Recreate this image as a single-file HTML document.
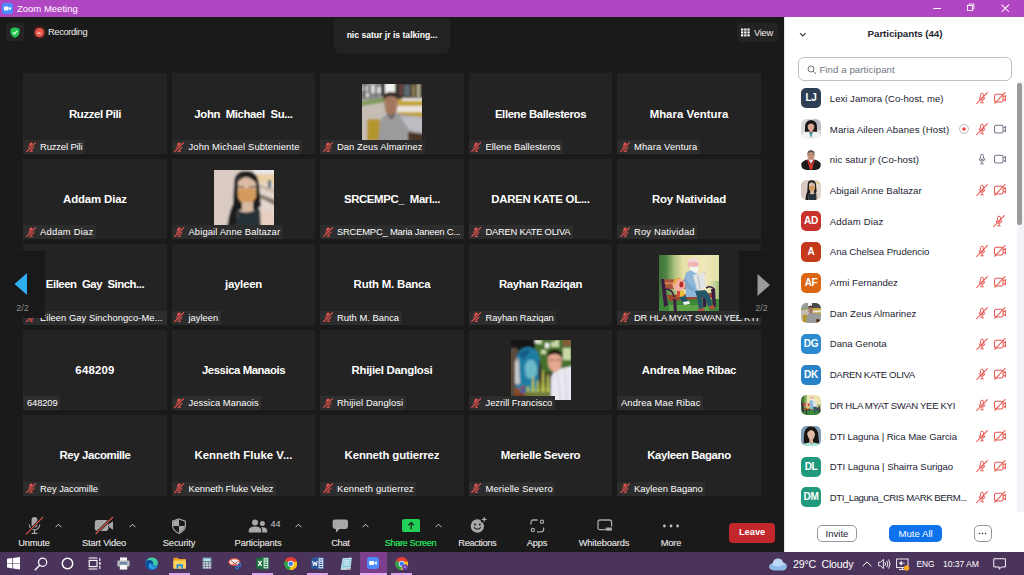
<!DOCTYPE html>
<html lang="en">
<head>
<meta charset="utf-8">
<title>Zoom Meeting</title>
<style>
*{box-sizing:border-box;margin:0;padding:0}
html,body{width:1024px;height:575px;overflow:hidden;background:#1a1a1a;font-family:"Liberation Sans",sans-serif;}
#root{position:relative;width:1024px;height:575px;overflow:hidden}
.abs{position:absolute}
/* title bar */
#titlebar{position:absolute;left:0;top:0;width:1024px;height:17px;background:#b146c2;color:#fff;font-size:9.5px;line-height:17px}
#titlebar .t{position:absolute;left:17px;top:0;white-space:nowrap}
/* video area */
#video{position:absolute;left:0;top:17px;width:784px;height:535px;background:#1a1a1a}
.tile{position:absolute;width:143.8px;height:80.7px;background:#232323;overflow:hidden}
.tile .big{position:absolute;left:0;right:0;top:32.3px;text-align:center;color:#fff;font-weight:bold;font-size:11.4px;line-height:16px;white-space:nowrap}
.tile .ph{position:absolute;left:42.1px;top:10.8px;width:60px;height:60px;overflow:hidden}
.tile .lab{position:absolute;left:0.4px;bottom:0;height:14px;background:#2d2d2d;color:#fff;font-size:9.4px;line-height:14px;padding:0 2.5px 0 16.5px;white-space:nowrap;max-width:143.4px;overflow:hidden}
.tile .lab.nm{padding-left:3.5px}
.tile .lab .mi{position:absolute;left:2.3px;top:1.6px;width:10.4px;height:10.4px}
/* panel */
#panel{position:absolute;left:784px;top:17px;width:240px;height:535px;background:#fff}
.prow{position:absolute;left:0;width:240px;height:30px}
.prow .av{position:absolute;left:17px;top:5px;width:20px;height:20px;border-radius:5px;color:#fff;font-size:10px;font-weight:bold;line-height:20px;text-align:center;overflow:hidden;letter-spacing:-0.3px}
.prow .pn{position:absolute;left:45.8px;top:7.6px;font-size:9.6px;line-height:16px;color:#232333;white-space:nowrap}
.prow .pi{position:absolute;top:8.7px}
/* taskbar */
#taskbar{position:absolute;left:0;top:552px;width:1024px;height:23px;background:#4b345c;overflow:hidden}
/* toolbar */
.tb{position:absolute;top:543px;transform:translate(-50%,-50%);color:#cacaca;font-size:9.3px;white-space:nowrap;letter-spacing:-0.15px;text-shadow:0 0 0.4px #cacaca}
</style>
</head>
<body>
<div id="root">
<svg width="0" height="0" style="position:absolute">
<defs>
<g id="mutesm">
  <rect x="3.6" y="0.6" width="3.8" height="6.6" rx="1.9" fill="#e8544e"/>
  <path d="M2.4 4.8 a3.1 3.1 0 0 0 6.2 0" fill="none" stroke="#e8544e" stroke-width="0.9"/>
  <path d="M5.5 7.8 v2 M3.6 9.9 h3.8" stroke="#e8544e" stroke-width="1" fill="none"/>
  <path d="M10.5 0.4 L0.4 10.3" stroke="#2c2c2c" stroke-width="2.4"/>
  <path d="M10.5 0.4 L0.4 10.3" stroke="#e8544e" stroke-width="1.25"/>
</g>
<g id="pmute">
  <rect x="4.6" y="1.2" width="2.8" height="5.6" rx="1.4" fill="none" stroke="#e8544e" stroke-width="1"/>
  <path d="M3.2 5.4 a2.8 2.8 0 0 0 5.6 0" fill="none" stroke="#e8544e" stroke-width="1"/>
  <path d="M6 8.3 v2.3 M4.3 10.8 h3.4" stroke="#e8544e" stroke-width="1" fill="none"/>
  <path d="M11.6 0.3 L0.4 11.8" stroke="#e8544e" stroke-width="1.05"/>
</g>
<g id="pmic">
  <rect x="4.6" y="1.2" width="2.8" height="5.6" rx="1.4" fill="none" stroke="#747487" stroke-width="1"/>
  <path d="M3.2 5.4 a2.8 2.8 0 0 0 5.6 0" fill="none" stroke="#747487" stroke-width="1"/>
  <path d="M6 8.3 v2.3 M4.3 10.8 h3.4" stroke="#747487" stroke-width="1" fill="none"/>
</g>
<g id="pvidoff">
  <rect x="0.5" y="2.3" width="8.6" height="7.6" rx="1.6" fill="none" stroke="#e8544e" stroke-width="1.05"/>
  <path d="M9.6 5 L11.7 3.6 V8.6 L9.6 7.2" fill="none" stroke="#e8544e" stroke-width="1.05"/>
  <path d="M11.4 0.2 L0.4 11.6" stroke="#e8544e" stroke-width="1.05"/>
</g>
<g id="pvid">
  <rect x="0.5" y="2.3" width="8.6" height="7.6" rx="1.6" fill="none" stroke="#747487" stroke-width="1.05"/>
  <path d="M9.6 5 L11.7 3.6 V8.6 L9.6 7.2" fill="none" stroke="#747487" stroke-width="1.05"/>
</g>
<g id="recdot">
  <circle cx="6" cy="6" r="4.4" fill="none" stroke="#9a9aa2" stroke-width="0.7"/>
  <circle cx="6" cy="6" r="1.8" fill="#e8403a"/>
</g>
<filter id="bl" x="-5%" y="-5%" width="110%" height="110%"><feGaussianBlur stdDeviation="1.1"/></filter>
<filter id="bl2" x="-5%" y="-5%" width="110%" height="110%"><feGaussianBlur stdDeviation="0.45"/></filter>
<linearGradient id="g3" x1="0" y1="0" x2="1" y2="0"><stop offset="0" stop-color="#3a6e36"/><stop offset="0.14" stop-color="#4f8344"/><stop offset="0.27" stop-color="#a9c07c"/><stop offset="0.4" stop-color="#e6e0a4"/><stop offset="0.75" stop-color="#f0e8b8"/><stop offset="1" stop-color="#dfe0a8"/></linearGradient><linearGradient id="g3b" x1="0" y1="0" x2="1" y2="0"><stop offset="0" stop-color="#e0e0a8" stop-opacity="0"/><stop offset="1" stop-color="#8db66e"/></linearGradient>
<clipPath id="c60"><rect width="60" height="60"/></clipPath>
<clipPath id="c20"><rect width="20" height="20" rx="5"/></clipPath>
<g id="p1" clip-path="url(#c60)"><g filter="url(#bl)">
  <rect x="-2" y="-2" width="64" height="64" fill="#b9b2aa"/>
  <rect x="-2" y="-2" width="24" height="18" fill="#8b8d8a"/>
  <path d="M0 2 h6 v5 h-6z M9 1 h4 v8 h-4z M15 3 h4 v6h-4z M3 9 h5 v4 h-5z" fill="#d9dad8"/>
  <path d="M1 0 h3 v14 h-3z M7 2 h2 v12 h-2z M13 1 h2 v12 h-2z" fill="#4a4c48" opacity=".6"/>
  <rect x="21" y="-2" width="13" height="11" fill="#f2f2f0"/>
  <rect x="19" y="-2" width="4" height="14" fill="#2e2c2a"/>
  <rect x="33" y="-2" width="29" height="18" fill="#3c3a36"/>
  <rect x="38" y="0" width="2" height="11" fill="#7a4a3e"/><rect x="42" y="1" width="6" height="11" fill="#5f6a70"/><rect x="50" y="1" width="3" height="12" fill="#8f7e4e"/><rect x="55" y="0" width="3" height="13" fill="#b4ad92"/>
  <path d="M-2 18 L22 14 L22 19 L-2 23 Z" fill="#7d9a52"/>
  <path d="M-2 22 L24 18 L30 62 L-2 62 Z" fill="#c5bdb4"/>
  <path d="M36 15 H62 V36 H36 Z" fill="#c4a536"/>
  <path d="M34 22 H62 V28 H34 Z" fill="#ebe4dc"/>
  <path d="M40 14 H62 V17 H40 Z" fill="#e2ddd2"/>
  <rect x="5" y="35" width="13" height="22" rx="2" fill="#b3962e"/>
  <path d="M16 62 L18 38 Q19 32 26 30 L38 30 Q50 32 62 33 V50 L50 48 L48 62 Z" fill="#9b9b9e"/>
  <path d="M38 32 Q52 32 62 34 V49 L47 46 Z" fill="#bcbcc2"/>
  <path d="M46 48 L62 50 V62 H46 Z" fill="#4a3626"/>
  <path d="M22 15 Q22 8 29 8 Q36 8 36 15 L35 26 Q33 32 29 32 Q25 32 23 26 Z" fill="#a47860"/>
  <path d="M21.5 16 Q21 8 29 8 Q37 8 36.5 16 Q34 12 29 12 Q24 12 21.5 16 Z" fill="#2a2420"/>
  <path d="M25 30 L29 36 L34 30 L32 29 L29 33 L27 29 Z" fill="#5a5a5e"/>
</g></g>
<g id="p2" clip-path="url(#c60)"><g filter="url(#bl)">
  <rect x="-2" y="-2" width="64" height="64" fill="#d9cbc4"/>
  <rect x="38" y="-2" width="24" height="64" fill="#e2d6ce"/>
  <rect x="40" y="-2" width="22" height="6" fill="#e8e8ea"/>
  <rect x="42" y="4" width="20" height="9" fill="#e8cfa4"/>
  <path d="M44 14 L62 20 V24 L44 17 Z" fill="#c8b8a4"/>
  <rect x="54" y="10" width="3" height="8" fill="#5a6a7a"/>
  <path d="M46 24 L62 30 V36 L46 28 Z" fill="#8a7c6c"/>
  <path d="M20 14 Q20 1 32 1 Q44 1 45 14 L47 36 L42 40 L24 40 L22 62 L13 62 Q14 44 19 34 Z" fill="#1b1a1d"/>
  <path d="M24 12 Q25 4 32 4 Q41 4 42 14 L42 24 Q40 34 33 34 Q26 34 24 26 Z" fill="#dcbca6"/>
  <path d="M24 12 Q26 3 33 3 Q41 3 43 14 Q38 8 32 7 Q27 8 24 12 Z" fill="#1b1a1d"/>
  <path d="M23.5 20 Q33 16 42.5 20 L42 27 Q39 34 33 34 Q26 34 24 27 Z" fill="#d39c5c"/>
  <path d="M23 17 h7 M35 17 h7" stroke="#3a2a24" stroke-width="1"/>
  <path d="M28 32 H39 V42 H28 Z" fill="#d8b8a2"/>
  <path d="M24 40 Q33 46 44 38 L48 42 V62 H22 Z" fill="#283238"/>
  <path d="M46 40 Q54 38 60 46 V62 H47 Z" fill="#e6cfc0"/>
</g></g>
<g id="p3" clip-path="url(#c60)"><g filter="url(#bl2)">
  <rect x="-2" y="-2" width="64" height="64" fill="url(#g3)"/>
  <rect x="46" y="26" width="16" height="24" fill="url(#g3b)"/>
  <rect x="-2" y="44" width="64" height="18" fill="#3d8738"/>
  <rect x="10" y="50" width="40" height="6" fill="#5da447"/>
  <path d="M3 24 L28 25 L30 34 L6 34 Z" fill="#a8553a"/>
  <path d="M5 28 L29 29" stroke="#d98a5a" stroke-width="1.6"/>
  <path d="M8 40 L54 38 L55 43 L10 46 Z" fill="#9c4a2e"/>
  <path d="M2 24 L5 24 L9 50 L5 52 Z M14 44 L17 44 L18 58 L15 58 Z M52 34 L56 34 L57 52 L54 52 Z M44 42 L47 42 L47 52 L44 52 Z" fill="#3b1c42"/>
  <path d="M47 33 Q52 30 55 34 Q56 38 53 40" fill="none" stroke="#3b1c42" stroke-width="1.6"/>
  <path d="M6 34 Q14 34 15 42" fill="none" stroke="#3b1c42" stroke-width="1.6"/>
  <circle cx="34" cy="9" r="5.6" fill="#f0b6b0"/>
  <path d="M28.6 8 Q29 2.6 35 3 Q40 3.4 39.6 8 Q34 5 28.6 8 Z" fill="#f6d9dc"/>
  <path d="M30.5 11 Q35 13 39.5 11 Q40 18 36 19.5 Q31 18 30.5 11 Z" fill="#f4f4f4"/>
  <path d="M26 20 Q28 15 33 16 L40 20 L41 30 L38 42 L27 42 Z" fill="#8eb7da"/>
  <path d="M25.5 22 Q30 30 36 33 L35 37 Q27 34 25 26 Z" fill="#7aa6cc"/>
  <path d="M34 20 L45 18 L47 33 L38 35 Z" fill="#e2e4e6"/>
  <path d="M44 18 L46 15 L47 20 Z" fill="#d2d4d6"/>
  <path d="M39 21 L41 34" stroke="#b8babc" stroke-width="1"/>
  <path d="M36 36 L46 35 Q51 38 53 50 L49 52 Q47 42 43 42 L44 54 L40 55 L38 42 Z" fill="#28566a"/>
  <path d="M39 54 L45 53 L46 57 L39 57.5 Z M50 51 L55 50 L56 54 L51 54.5 Z" fill="#a8543a"/>
  <circle cx="20" cy="30" r="6.4" fill="#f2b2a2"/>
  <path d="M14 28 Q15 22 22 23 Q17 25 16 30 Z" fill="#e8a83a"/>
  <ellipse cx="22.4" cy="29.6" rx="2" ry="3" fill="#b82c2c"/>
  <path d="M19 36 L25 36 L25 42 L19 42 Z" fill="#e7bf32"/>
  <path d="M18 36 L21 36 L21 42 L18 41 Z" fill="#d8483a"/>
  <path d="M20 42 L27 41 L29 47 L24 48 Z" fill="#28566a"/>
  <path d="M24 47 L30 46 L31 49 L25 50 Z" fill="#f2f2f2"/>
</g></g>
<g id="p4" clip-path="url(#c60)"><g filter="url(#bl)">
  <rect x="-2" y="-2" width="64" height="64" fill="#3a3a2a"/>
  <rect x="-2" y="-2" width="28" height="12" fill="#181812"/>
  <rect x="-2" y="8" width="8" height="54" fill="#5a4c3c"/>
  <rect x="24" y="-2" width="38" height="34" fill="#46702f"/>
  <path d="M26 0 h5 v4 h-5z M40 2 h8 v5 h-8z M52 8 h8 v12 h-8z M30 10 h5 v4 h-5z M44 0 h4 v3 h-4z" fill="#c9d8a6"/>
  <path d="M24 0 h4 v3 h-4z M34 3 h4 v5 h-4z" fill="#eef2e6"/>
  <path d="M52 0 h8 v6 h-8z" fill="#8a5a3a"/>
  <path d="M5 52 V24 Q5 8 17 7 Q29 8 29 24 V52 Z" fill="#1c7ea4"/>
  <path d="M14 26 Q16 18 22 20 Q27 24 26 34 Q22 40 16 38 Q13 32 14 26 Z" fill="#6bb8c8"/>
  <path d="M8 14 Q14 8 20 10 L12 20 Z" fill="#155a82"/>
  <path d="M28 20 Q32 24 31 52 L27 52 Z" fill="#3a2c22"/>
  <path d="M4 22 Q6 19 8 22 L9 44 L4 44 Z" fill="#c9c9c9"/>
  <circle cx="6.2" cy="20" r="1.8" fill="#b8b0a8"/>
  <path d="M20 60 L22 36 L24 60 Z M25 60 L27 40 L29 60 Z M30 60 L32 30 L34 60 Z M35 60 L37 34 L39 60 Z M15 60 L17 46 L19 60 Z" fill="#b9c251" stroke="#b9c251" stroke-width="1.2"/>
  <rect x="14" y="52" width="28" height="10" fill="#6f7d3a"/>
  <path d="M4 48 h5 v8 h-5z M10 46 h4 v10 h-4z" fill="#8e4a22"/>
  <rect x="10.4" y="49" width="3" height="4" fill="#3a5ac0"/>
  <rect x="-2" y="56" width="20" height="6" fill="#2e2a24"/>
  <path d="M40 62 L40 38 Q42 30 48 29 L62 26 V62 Z" fill="#e8e9f0"/>
  <path d="M46 32 L50 62 M54 30 L56 62" stroke="#c8cad6" stroke-width="1"/>
  <path d="M37 16 Q37 11 44 10.5 Q51 11 51 17 L50 27 Q47 33 43 32 Q38 30 37 24 Z" fill="#e6a88e"/>
  <path d="M36.6 17 Q36 10 44 9.6 Q52 10 51.4 18 Q48 13.4 43 14 Q39 14 36.6 17 Z" fill="#16140f"/>
  <path d="M38 20 h5 M45 20 h5" stroke="#7a4a3a" stroke-width="1"/>
</g></g>
<g id="a1" clip-path="url(#c20)"><g filter="url(#bl2)">
  <rect x="-1" y="-1" width="22" height="22" fill="#d9d9dc"/>
  <rect x="13" y="-1" width="8" height="12" fill="#b9bcc4"/>
  <path d="M4 12 Q3 1 10 1 Q17 1 16 12 L15 15 L5 15 Z" fill="#1a1718"/>
  <ellipse cx="10" cy="7.6" rx="3.3" ry="4.2" fill="#d9a896"/>
  <path d="M6.4 7 Q7 2.6 10 2.8 Q13 2.6 13.6 7 Q12 4.6 10 4.6 Q8 4.6 6.4 7 Z" fill="#1a1718"/>
  <path d="M0 21 L1 15 Q4 12.6 8 12.6 L10 16 L12 12.6 Q16 12.6 19 15 L20 21 Z" fill="#f1f1f3"/>
  <path d="M8 12.6 L10 19 L12 12.6 L10 14 Z" fill="#2f93a8"/>
  <path d="M8.6 11 h2.8 v2.6 h-2.8z" fill="#d9a896"/>
</g></g>
<g id="a2" clip-path="url(#c20)"><g filter="url(#bl2)">
  <rect x="-1" y="-1" width="22" height="22" fill="#ffffff"/>
  <path d="M0 20 L0.4 13.4 Q2 10.6 7 9.6 L13 9.6 Q18 10.6 19.6 13.4 L20 20 Z" fill="#1d1b1e"/>
  <path d="M7.2 9.6 L10 14 L12.8 9.6 Z" fill="#e7e2e0"/>
  <path d="M6.8 9.8 L9.6 19 M13.2 9.8 L10.4 19" stroke="#d8332b" stroke-width="1.3" fill="none"/>
  <path d="M8.8 13.6 h2.4 v6 h-2.4z" fill="#d8332b"/>
  <ellipse cx="10" cy="5.2" rx="3.8" ry="4.9" fill="#cf9c84"/>
  <path d="M6.2 4.6 Q6.4 0.2 10 0.2 Q13.6 0.2 13.8 4.6 Q12.4 2.2 10 2.2 Q7.6 2.2 6.2 4.6 Z" fill="#5a5050"/>
  <path d="M7.2 4.8 h2.2 M10.6 4.8 h2.2" stroke="#4a3a36" stroke-width="0.6"/>
  <path d="M8.4 7.6 h3.2" stroke="#9a5a4a" stroke-width="0.6"/>
</g></g>
<g id="a3" clip-path="url(#c20)"><g filter="url(#bl2)" transform="scale(0.3333)">
  <rect x="-2" y="-2" width="64" height="64" fill="#d9cbc4"/>
  <rect x="38" y="-2" width="24" height="64" fill="#e2d6ce"/>
  <rect x="42" y="4" width="20" height="9" fill="#e8cfa4"/>
  <path d="M20 14 Q20 1 32 1 Q44 1 45 14 L47 36 L42 40 L24 40 L22 62 L13 62 Q14 44 19 34 Z" fill="#1b1a1d"/>
  <path d="M24 12 Q25 4 32 4 Q41 4 42 14 L42 24 Q40 34 33 34 Q26 34 24 26 Z" fill="#dcbca6"/>
  <path d="M24 12 Q26 3 33 3 Q41 3 43 14 Q38 8 32 7 Q27 8 24 12 Z" fill="#1b1a1d"/>
  <path d="M23.5 20 Q33 16 42.5 20 L42 27 Q39 34 33 34 Q26 34 24 27 Z" fill="#d39c5c"/>
  <path d="M28 32 H39 V42 H28 Z" fill="#d8b8a2"/>
  <path d="M24 40 Q33 46 44 38 L48 42 V62 H22 Z" fill="#283238"/>
  <path d="M46 40 Q54 38 60 46 V62 H47 Z" fill="#e6cfc0"/>
</g></g>
<g id="a4" clip-path="url(#c20)"><g filter="url(#bl2)" transform="scale(0.3333)">
  <rect x="-2" y="-2" width="64" height="64" fill="#b9b2aa"/>
  <rect x="-2" y="-2" width="24" height="18" fill="#9b9d9a"/>
  <rect x="21" y="-2" width="13" height="11" fill="#f2f2f0"/>
  <rect x="33" y="-2" width="29" height="18" fill="#4c4a46"/>
  <path d="M-2 18 L22 14 L22 19 L-2 23 Z" fill="#7d9a52"/>
  <path d="M-2 22 L24 18 L30 62 L-2 62 Z" fill="#c5bdb4"/>
  <path d="M36 15 H62 V36 H36 Z" fill="#c4a536"/>
  <path d="M34 22 H62 V28 H34 Z" fill="#ebe4dc"/>
  <rect x="5" y="35" width="13" height="22" rx="2" fill="#b3962e"/>
  <path d="M16 62 L18 38 Q19 32 26 30 L38 30 Q50 32 62 33 V50 L50 48 L48 62 Z" fill="#9b9b9e"/>
  <path d="M46 48 L62 50 V62 H46 Z" fill="#4a3626"/>
  <path d="M22 15 Q22 8 29 8 Q36 8 36 15 L35 26 Q33 32 29 32 Q25 32 23 26 Z" fill="#a47860"/>
  <path d="M21.5 16 Q21 8 29 8 Q37 8 36.5 16 Q34 12 29 12 Q24 12 21.5 16 Z" fill="#2a2420"/>
</g></g>
<g id="a5" clip-path="url(#c20)"><g filter="url(#bl2)" transform="scale(0.3333)">
  <rect x="-2" y="-2" width="64" height="64" fill="#ece4ae"/>
  <rect x="-2" y="-2" width="12" height="64" fill="#3f7238"/>
  <rect x="9" y="-2" width="8" height="50" fill="#7fa65e"/>
  <rect x="48" y="28" width="14" height="22" fill="#a9c283"/>
  <rect x="-2" y="44" width="64" height="18" fill="#3d8738"/>
  <path d="M3 24 L28 25 L30 34 L6 34 Z" fill="#a8553a"/>
  <path d="M8 40 L54 38 L55 43 L10 46 Z" fill="#9c4a2e"/>
  <path d="M2 24 L5 24 L9 50 L5 52 Z M14 44 L17 44 L18 58 L15 58 Z M52 34 L56 34 L57 52 L54 52 Z" fill="#3b1c42"/>
  <circle cx="34" cy="9" r="5.6" fill="#f0b6b0"/>
  <path d="M30.5 11 Q35 13 39.5 11 Q40 18 36 19.5 Q31 18 30.5 11 Z" fill="#f4f4f4"/>
  <path d="M26 20 Q28 15 33 16 L40 20 L41 30 L38 42 L27 42 Z" fill="#8eb7da"/>
  <path d="M34 20 L45 18 L47 33 L38 35 Z" fill="#e2e4e6"/>
  <path d="M36 36 L46 35 Q51 38 53 50 L49 52 Q47 42 43 42 L44 54 L40 55 L38 42 Z" fill="#28566a"/>
  <circle cx="20" cy="30" r="6.4" fill="#f2b2a2"/>
  <ellipse cx="22.4" cy="29.6" rx="2" ry="3" fill="#b82c2c"/>
  <path d="M19 36 L25 36 L25 42 L19 42 Z" fill="#e7bf32"/>
  <path d="M20 42 L27 41 L29 47 L24 48 Z" fill="#28566a"/>
</g></g>
<g id="a6" clip-path="url(#c20)"><g filter="url(#bl2)">
  <rect x="-1" y="-1" width="22" height="22" fill="#7f9db4"/>
  <path d="M3 17 Q1.6 1 9.6 0.6 Q17.6 0.6 17.6 12 L18 17 L14 18 L6 18 Z" fill="#15120f"/>
  <path d="M6 7 Q6.4 2.6 10 2.6 Q13.6 2.6 14 8 Q13.6 13.6 10.4 14 Q7 13.6 6 7 Z" fill="#e1b9a3"/>
  <path d="M5.6 8 Q5.6 2 10.4 2 Q14.4 2.4 14.4 8 Q13 4.6 10.6 4 Q8 4 5.6 8 Z" fill="#15120f"/>
  <path d="M8.4 13 h3.6 v4 h-3.6z" fill="#d9ad96"/>
  <path d="M1 21 L2 18.4 Q6 16.6 8.4 16.4 L10.4 18 L12.4 16.4 Q15 16.6 18 18.4 L19 21 Z" fill="#a7e3d4"/>
  <path d="M8.4 16.4 L10.4 18 L12.4 16.4 Z" fill="#d9ad96"/>
</g></g>
</defs>
</svg>

<div id="titlebar">
  <svg class="abs" style="left:2px;top:3px" width="11" height="11" viewBox="0 0 11 11"><rect width="11" height="11" rx="2.8" fill="#4a8cff"/><rect x="2" y="3.6" width="4.6" height="3.8" rx="0.9" fill="#fff"/><path d="M7 5 L9 3.8 V7.2 L7 6 Z" fill="#fff"/></svg>
  <span class="t">Zoom Meeting</span>
  <svg class="abs" style="left:920px;top:0" width="104" height="17" viewBox="0 0 104 17">
    <path d="M13.4 8.5 h7.6" stroke="#fff" stroke-width="1"/>
    <rect x="47.4" y="5.5" width="5" height="5" fill="none" stroke="#fff" stroke-width="0.9"/>
    <path d="M48.9 5.5 v-1.5 h5 v5 h-1.5" fill="none" stroke="#fff" stroke-width="0.9"/>
    <path d="M81.6 4.6 l7.4 7.4 M89 4.6 l-7.4 7.4" stroke="#fff" stroke-width="1.05"/>
  </svg>
</div>

<div id="video">
</div>
<div class="tile" style="left:23.1px;top:73.3px"><div class="big" style="letter-spacing:-0.404px">Ruzzel Pili</div><div class="lab"><svg class="mi" viewBox="0 0 11 11"><use href="#mutesm"/></svg><span style="letter-spacing:-0.124px">Ruzzel Pili</span></div></div>
<div class="tile" style="left:171.6px;top:73.3px"><div class="big" style="letter-spacing:-0.370px">John&nbsp; Michael&nbsp; Su...</div><div class="lab"><svg class="mi" viewBox="0 0 11 11"><use href="#mutesm"/></svg><span style="letter-spacing:0.130px">John Michael Subteniente</span></div></div>
<div class="tile" style="left:320.1px;top:73.3px"><div class="ph"><svg width="60" height="60" viewBox="0 0 60 60"><use href="#p1"/></svg></div><div class="lab"><svg class="mi" viewBox="0 0 11 11"><use href="#mutesm"/></svg><span style="letter-spacing:0.060px">Dan Zeus Almarinez</span></div></div>
<div class="tile" style="left:468.6px;top:73.3px"><div class="big" style="letter-spacing:-0.386px">Ellene Ballesteros</div><div class="lab"><svg class="mi" viewBox="0 0 11 11"><use href="#mutesm"/></svg><span style="letter-spacing:-0.008px">Ellene Ballesteros</span></div></div>
<div class="tile" style="left:617.1px;top:73.3px"><div class="big" style="letter-spacing:0.015px">Mhara Ventura</div><div class="lab"><svg class="mi" viewBox="0 0 11 11"><use href="#mutesm"/></svg><span style="letter-spacing:0.154px">Mhara Ventura</span></div></div>
<div class="tile" style="left:23.1px;top:158.8px"><div class="big" style="letter-spacing:-0.130px">Addam Diaz</div><div class="lab"><svg class="mi" viewBox="0 0 11 11"><use href="#mutesm"/></svg><span style="letter-spacing:0.242px">Addam Diaz</span></div></div>
<div class="tile" style="left:171.6px;top:158.8px"><div class="ph"><svg width="60" height="60" viewBox="0 0 60 60"><use href="#p2"/></svg></div><div class="lab"><svg class="mi" viewBox="0 0 11 11"><use href="#mutesm"/></svg><span style="letter-spacing:0.123px">Abigail Anne Baltazar</span></div></div>
<div class="tile" style="left:320.1px;top:158.8px"><div class="big" style="letter-spacing:-0.379px">SRCEMPC_&nbsp; Mari...</div><div class="lab" style="width:143.4px"><svg class="mi" viewBox="0 0 11 11"><use href="#mutesm"/></svg><span style="letter-spacing:-0.200px">SRCEMPC_ Maria Janeen C...</span></div></div>
<div class="tile" style="left:468.6px;top:158.8px"><div class="big" style="letter-spacing:-0.245px">DAREN KATE OL...</div><div class="lab"><svg class="mi" viewBox="0 0 11 11"><use href="#mutesm"/></svg><span style="letter-spacing:-0.247px">DAREN KATE OLIVA</span></div></div>
<div class="tile" style="left:617.1px;top:158.8px"><div class="big" style="letter-spacing:-0.143px">Roy Natividad</div><div class="lab"><svg class="mi" viewBox="0 0 11 11"><use href="#mutesm"/></svg><span style="letter-spacing:0.179px">Roy Natividad</span></div></div>
<div class="tile" style="left:23.1px;top:244.2px"><div class="big" style="letter-spacing:-0.475px">Eileen&nbsp; Gay&nbsp; Sinch...</div><div class="lab" style="width:143.4px"><svg class="mi" viewBox="0 0 11 11"><use href="#mutesm"/></svg><span style="letter-spacing:0.040px">Eileen Gay Sinchongco-Me...</span></div></div>
<div class="tile" style="left:171.6px;top:244.2px"><div class="big" style="letter-spacing:-0.220px">jayleen</div><div class="lab"><svg class="mi" viewBox="0 0 11 11"><use href="#mutesm"/></svg><span style="letter-spacing:-0.003px">jayleen</span></div></div>
<div class="tile" style="left:320.1px;top:244.2px"><div class="big" style="letter-spacing:-0.178px">Ruth M. Banca</div><div class="lab"><svg class="mi" viewBox="0 0 11 11"><use href="#mutesm"/></svg><span style="letter-spacing:0.006px">Ruth M. Banca</span></div></div>
<div class="tile" style="left:468.6px;top:244.2px"><div class="big" style="letter-spacing:-0.349px">Rayhan Raziqan</div><div class="lab"><svg class="mi" viewBox="0 0 11 11"><use href="#mutesm"/></svg><span style="letter-spacing:-0.081px">Rayhan Raziqan</span></div></div>
<div class="tile" style="left:617.1px;top:244.2px"><div class="ph"><svg width="60" height="60" viewBox="0 0 60 60"><use href="#p3"/></svg></div><div class="lab" style="width:143.4px"><svg class="mi" viewBox="0 0 11 11"><use href="#mutesm"/></svg><span style="letter-spacing:-0.240px">DR HLA MYAT SWAN YEE KYI</span></div></div>
<div class="tile" style="left:23.1px;top:329.6px"><div class="big" style="letter-spacing:0.214px">648209</div><div class="lab nm"><span style="letter-spacing:-0.133px">648209</span></div></div>
<div class="tile" style="left:171.6px;top:329.6px"><div class="big" style="letter-spacing:-0.455px">Jessica Manaois</div><div class="lab"><svg class="mi" viewBox="0 0 11 11"><use href="#mutesm"/></svg><span style="letter-spacing:0.059px">Jessica Manaois</span></div></div>
<div class="tile" style="left:320.1px;top:329.6px"><div class="big" style="letter-spacing:-0.291px">Rhijiel Danglosi</div><div class="lab"><svg class="mi" viewBox="0 0 11 11"><use href="#mutesm"/></svg><span style="letter-spacing:0.098px">Rhijiel Danglosi</span></div></div>
<div class="tile" style="left:468.6px;top:329.6px"><div class="ph"><svg width="60" height="60" viewBox="0 0 60 60"><use href="#p4"/></svg></div><div class="lab"><svg class="mi" viewBox="0 0 11 11"><use href="#mutesm"/></svg><span style="letter-spacing:-0.024px">Jezrill Francisco</span></div></div>
<div class="tile" style="left:617.1px;top:329.6px"><div class="big" style="letter-spacing:-0.273px">Andrea Mae Ribac</div><div class="lab nm"><span style="letter-spacing:0.115px">Andrea Mae Ribac</span></div></div>
<div class="tile" style="left:23.1px;top:415.1px"><div class="big" style="letter-spacing:-0.368px">Rey Jacomille</div><div class="lab"><svg class="mi" viewBox="0 0 11 11"><use href="#mutesm"/></svg><span style="letter-spacing:-0.028px">Rey Jacomille</span></div></div>
<div class="tile" style="left:171.6px;top:415.1px"><div class="big" style="letter-spacing:0.012px">Kenneth Fluke V...</div><div class="lab"><svg class="mi" viewBox="0 0 11 11"><use href="#mutesm"/></svg><span style="letter-spacing:-0.053px">Kenneth Fluke Velez</span></div></div>
<div class="tile" style="left:320.1px;top:415.1px"><div class="big" style="letter-spacing:-0.120px">Kenneth gutierrez</div><div class="lab"><svg class="mi" viewBox="0 0 11 11"><use href="#mutesm"/></svg><span style="letter-spacing:0.176px">Kenneth gutierrez</span></div></div>
<div class="tile" style="left:468.6px;top:415.1px"><div class="big" style="letter-spacing:-0.272px">Merielle Severo</div><div class="lab"><svg class="mi" viewBox="0 0 11 11"><use href="#mutesm"/></svg><span style="letter-spacing:0.144px">Merielle Severo</span></div></div>
<div class="tile" style="left:617.1px;top:415.1px"><div class="big" style="letter-spacing:-0.366px">Kayleen Bagano</div><div class="lab"><svg class="mi" viewBox="0 0 11 11"><use href="#mutesm"/></svg><span style="letter-spacing:-0.001px">Kayleen Bagano</span></div></div>

<!-- nav overlays -->
<div class="abs" style="left:0;top:250.5px;width:45px;height:67px;background:#191919"></div>
<svg class="abs" style="left:14px;top:273px" width="14" height="22" viewBox="0 0 14 22"><path d="M13 0 V22 L0.5 11 Z" fill="#2eaef0"/></svg>
<div class="abs" style="left:0;top:302px;width:45px;text-align:center;font-size:9px;color:#8a8a8a;line-height:12px">2/2</div>
<div class="abs" style="left:739px;top:250.5px;width:45px;height:67px;background:#191919"></div>
<svg class="abs" style="left:757px;top:274px" width="14" height="22" viewBox="0 0 14 22"><path d="M0.5 0 V22 L13 11 Z" fill="#9a9a9a"/></svg>
<div class="abs" style="left:739px;top:302px;width:45px;text-align:center;font-size:9px;color:#8a8a8a;line-height:12px">2/2</div>

<!-- top bar items -->
<div class="abs" style="left:6px;top:23px;width:18px;height:18px;border-radius:3px;background:#242424"></div>
<svg class="abs" style="left:10px;top:27px" width="10" height="11" viewBox="0 0 10 11"><path d="M5 0.3 L9.5 1.8 V5.4 C9.5 8 7.4 9.9 5 10.8 C2.6 9.9 0.5 8 0.5 5.4 V1.8 Z" fill="#23c552"/><path d="M2.8 5.4 L4.4 7 L7.3 3.9" fill="none" stroke="#fff" stroke-width="1.1"/></svg>
<div class="abs" style="left:34.5px;top:27.5px;width:9px;height:9px;border-radius:50%;background:#e8554a;box-shadow:0 0 3px 1px rgba(200,60,40,.55)"></div>
<div class="abs" style="left:37px;top:31.5px;width:4px;height:2.5px;border-radius:2px 2px 0 0;background:#f7b0a8"></div>
<div class="abs" style="left:48px;top:25px;font-size:9.3px;line-height:14px;color:#eee;letter-spacing:-0.35px">Recording</div>

<div class="abs" style="left:334px;top:18px;width:116px;height:35px;border-radius:6px;background:#232323"></div>
<div class="abs" style="left:334px;top:28px;width:116px;text-align:center;font-size:8.6px;font-weight:bold;color:#fff;line-height:14px;white-space:nowrap">nic satur jr is talking...</div>

<div class="abs" style="left:737px;top:23px;width:41px;height:19px;border-radius:4px;background:#232323"></div>
<svg class="abs" style="left:741px;top:28px" width="9" height="9" viewBox="0 0 9 9"><g fill="#fff"><rect x="0" y="0.5" width="2.3" height="2.1"/><rect x="3.2" y="0.5" width="2.3" height="2.1"/><rect x="6.4" y="0.5" width="2.3" height="2.1"/><rect x="0" y="3.4" width="2.3" height="2.1"/><rect x="3.2" y="3.4" width="2.3" height="2.1"/><rect x="6.4" y="3.4" width="2.3" height="2.1"/><rect x="0" y="6.3" width="2.3" height="2.1"/><rect x="3.2" y="6.3" width="2.3" height="2.1"/><rect x="6.4" y="6.3" width="2.3" height="2.1"/></g></svg>
<div class="abs" style="left:754px;top:25.5px;font-size:9.3px;line-height:14px;color:#eee;letter-spacing:-0.25px">View</div>


<!-- toolbar icons -->
<svg class="abs" style="left:24px;top:515px" width="22" height="22" viewBox="0 0 22 22">
  <rect x="7.6" y="2" width="5.8" height="10.6" rx="2.9" fill="#a8a8a8"/>
  <path d="M5.3 9.6 a5.2 5.2 0 0 0 10.4 0" fill="none" stroke="#a8a8a8" stroke-width="1.1"/>
  <path d="M10.5 14.8 v3.2 M7.6 18.4 h5.8" stroke="#a8a8a8" stroke-width="1.2" fill="none"/>
  <path d="M19.2 1.8 L2 19.4" stroke="#1a1a1a" stroke-width="2.6"/>
  <path d="M19.2 1.8 L2 19.4" stroke="#e2554c" stroke-width="1.1"/>
</svg>
<svg class="abs" style="left:55px;top:523px" width="7" height="5" viewBox="0 0 7 5"><path d="M0.6 4.2 L3.5 1.2 L6.4 4.2" fill="none" stroke="#c8c8c8" stroke-width="1"/></svg>

<svg class="abs" style="left:93px;top:515px" width="22" height="22" viewBox="0 0 22 22">
  <rect x="1.8" y="5" width="13.6" height="11" rx="2.4" fill="#a8a8a8"/>
  <path d="M15.8 9.3 L19.4 6.6 Q20 6.2 20 7 V14 Q20 14.8 19.4 14.4 L15.8 11.7 Z" fill="#a8a8a8"/>
  <path d="M20 2 L2.6 19" stroke="#1a1a1a" stroke-width="2.6"/>
  <path d="M20 2 L2.6 19" stroke="#e2554c" stroke-width="1.1"/>
</svg>
<svg class="abs" style="left:128.5px;top:523px" width="7" height="5" viewBox="0 0 7 5"><path d="M0.6 4.2 L3.5 1.2 L6.4 4.2" fill="none" stroke="#c8c8c8" stroke-width="1"/></svg>

<svg class="abs" style="left:171px;top:517.5px" width="16" height="16" viewBox="0 0 16 16">
  <path d="M8 1 L14.4 3.2 V7.6 C14.4 11.4 11.6 14 8 15.4 C4.4 14 1.6 11.4 1.6 7.6 V3.2 Z" fill="#1a1a1a" stroke="#a8a8a8" stroke-width="1.2"/>
  <path d="M8 1.6 L2.2 3.6 V8 H8 Z" fill="#a8a8a8"/>
  <path d="M8 8 H13.8 C13.6 11.2 11.2 13.4 8 14.8 Z" fill="#a8a8a8"/>
</svg>

<svg class="abs" style="left:248px;top:518px" width="20" height="16" viewBox="0 0 20 16">
  <circle cx="7" cy="4.4" r="3" fill="#a8a8a8"/>
  <path d="M0.8 14.4 V12.4 C0.8 9.8 3.6 8.4 7 8.4 C10.4 8.4 13.2 9.8 13.2 12.4 V14.4 Z" fill="#a8a8a8"/>
  <circle cx="14.4" cy="5.4" r="2.5" fill="#a8a8a8"/>
  <path d="M14.2 14.4 V12.2 C14.2 11 13.8 10.2 13 9.4 C13.4 9.3 14 9.2 14.6 9.2 C17.2 9.2 19.2 10.4 19.2 12.6 V14.4 Z" fill="#a8a8a8"/>
</svg>
<div class="abs" style="left:270.4px;top:518px;font-size:9.2px;line-height:12px;color:#c6c6c6">44</div>
<svg class="abs" style="left:294.5px;top:523px" width="7" height="5" viewBox="0 0 7 5"><path d="M0.6 4.2 L3.5 1.2 L6.4 4.2" fill="none" stroke="#c8c8c8" stroke-width="1"/></svg>

<svg class="abs" style="left:332px;top:519px" width="17" height="14" viewBox="0 0 17 14">
  <path d="M3 0.4 H13.6 Q16 0.4 16 2.8 V7.6 Q16 10 13.6 10 H7.6 L4 13.4 V10 H3 Q0.6 10 0.6 7.6 V2.8 Q0.6 0.4 3 0.4 Z" fill="#a8a8a8"/>
</svg>
<svg class="abs" style="left:362px;top:523px" width="7" height="5" viewBox="0 0 7 5"><path d="M0.6 4.2 L3.5 1.2 L6.4 4.2" fill="none" stroke="#c8c8c8" stroke-width="1"/></svg>

<svg class="abs" style="left:402px;top:519px" width="18.4" height="13.4" viewBox="0 0 18.4 13.4">
  <rect width="18.4" height="13.4" rx="2.6" fill="#22d058"/>
  <path d="M9.2 10.2 V3.6 M6.4 6.3 L9.2 3.4 L12 6.3" fill="none" stroke="#12321c" stroke-width="1.4"/>
</svg>
<svg class="abs" style="left:435px;top:523px" width="7" height="5" viewBox="0 0 7 5"><path d="M0.6 4.2 L3.5 1.2 L6.4 4.2" fill="none" stroke="#c8c8c8" stroke-width="1"/></svg>

<svg class="abs" style="left:469px;top:516px" width="19" height="18" viewBox="0 0 19 18">
  <circle cx="8.4" cy="10" r="6.7" fill="#a8a8a8"/>
  <circle cx="6" cy="8.6" r="1" fill="#1a1a1a"/><circle cx="10.8" cy="8.6" r="1" fill="#1a1a1a"/>
  <path d="M5 11.4 Q8.4 15 11.8 11.4" fill="none" stroke="#1a1a1a" stroke-width="1.1"/>
  <circle cx="15.2" cy="3.4" r="3.6" fill="#1a1a1a"/>
  <path d="M15.2 1 V5.8 M12.8 3.4 H17.6" stroke="#c0c0c0" stroke-width="1"/>
</svg>

<svg class="abs" style="left:530px;top:519px" width="15" height="14" viewBox="0 0 15 14">
  <path d="M1 5.4 V3.4 Q1 1 3.4 1 H7.6" fill="none" stroke="#a8a8a8" stroke-width="1.3"/>
  <path d="M13.6 8.4 V10.4 Q13.6 12.8 11.2 12.8 H7" fill="none" stroke="#a8a8a8" stroke-width="1.3"/>
  <circle cx="12" cy="2.8" r="1.6" fill="none" stroke="#a8a8a8" stroke-width="1.2"/>
  <circle cx="2.8" cy="11" r="1.6" fill="none" stroke="#a8a8a8" stroke-width="1.2"/>
</svg>

<svg class="abs" style="left:596.5px;top:518.5px" width="16" height="13" viewBox="0 0 16 13">
  <path d="M8.4 10.6 H3 Q1 10.6 1 8.6 V3 Q1 1 3 1 H12.6 Q14.6 1 14.6 3 V7.4" fill="none" stroke="#a8a8a8" stroke-width="1.3"/>
  <rect x="8.6" y="8.6" width="6.4" height="3.2" rx="1" fill="#a8a8a8"/>
</svg>

<svg class="abs" style="left:662px;top:524px" width="18" height="4" viewBox="0 0 18 4"><circle cx="2.4" cy="2" r="1.4" fill="#c0c0c0"/><circle cx="9" cy="2" r="1.4" fill="#c0c0c0"/><circle cx="15.6" cy="2" r="1.4" fill="#c0c0c0"/></svg>

<!-- toolbar -->
<div class="tb" style="left:34px">Unmute</div>
<div class="tb" style="left:104px">Start Video</div>
<div class="tb" style="left:179px">Security</div>
<div class="tb" style="left:258px">Participants</div>
<div class="tb" style="left:340.4px;letter-spacing:-0.3px">Chat</div>
<div class="tb" style="left:410.5px;color:#23d959;letter-spacing:-0.45px;text-shadow:0 0 0.4px #23d959">Share Screen</div>
<div class="tb" style="left:477.3px;letter-spacing:-0.38px">Reactions</div>
<div class="tb" style="left:537px">Apps</div>
<div class="tb" style="left:604px">Whiteboards</div>
<div class="tb" style="left:671px">More</div>
<div class="abs" style="left:729.4px;top:523px;width:45.4px;height:19.7px;border-radius:4px;background:#c2272b;color:#fff;font-size:9.3px;font-weight:bold;text-align:center;line-height:19.6px">Leave</div>

<!-- panel -->
<div id="panel">
  <div class="abs" style="left:1px;top:10px;width:240px;text-align:center;font-size:9.8px;font-weight:bold;color:#1f1f2e;line-height:14px;letter-spacing:-0.08px">Participants (44)</div>
  <svg class="abs" style="left:14.6px;top:15px" width="8" height="6" viewBox="0 0 8 6"><path d="M1 1.2 L3.8 4 L6.6 1.2" fill="none" stroke="#3a3a44" stroke-width="1.2"/></svg>
  <div class="abs" style="left:14.3px;top:40.3px;width:213.5px;height:24.2px;border:1px solid #bfbfc8;border-radius:6px"></div>
  <svg class="abs" style="left:22.6px;top:47.6px" width="10" height="10" viewBox="0 0 10 10"><circle cx="4" cy="4" r="3" fill="none" stroke="#666" stroke-width="0.9"/><path d="M6.2 6.2 L9 9" stroke="#666" stroke-width="0.9"/></svg>
  <div class="abs" style="left:35.4px;top:45.5px;font-size:9.6px;color:#6e7680;line-height:14px;letter-spacing:0.1px">Find a participant</div>
<div class="prow" style="top:66.3px"><div class="av" style="background:#2e3f55">LJ</div><div class="pn" style="letter-spacing:0.006px">Lexi Jamora (Co-host, me)</div><svg class="pi" style="left:192px" width="12" height="12" viewBox="0 0 12 12"><use href="#pmute"/></svg><svg class="pi" style="left:210px" width="12" height="12" viewBox="0 0 12 12"><use href="#pvidoff"/></svg></div>
<div class="prow" style="top:97.0px"><div class="av"><svg width="20" height="20" viewBox="0 0 20 20"><use href="#a1"/></svg></div><div class="pn" style="letter-spacing:0.121px">Maria Aileen Abanes (Host)</div><svg class="pi" style="left:174px;top:9px" width="12" height="12" viewBox="0 0 12 12"><use href="#recdot"/></svg><svg class="pi" style="left:192px" width="12" height="12" viewBox="0 0 12 12"><use href="#pmute"/></svg><svg class="pi" style="left:210px" width="12" height="12" viewBox="0 0 12 12"><use href="#pvid"/></svg></div>
<div class="prow" style="top:127.7px"><div class="av"><svg width="20" height="20" viewBox="0 0 20 20"><use href="#a2"/></svg></div><div class="pn" style="letter-spacing:0.104px">nic satur jr (Co-host)</div><svg class="pi" style="left:192px" width="12" height="12" viewBox="0 0 12 12"><use href="#pmic"/></svg><svg class="pi" style="left:210px" width="12" height="12" viewBox="0 0 12 12"><use href="#pvid"/></svg></div>
<div class="prow" style="top:158.4px"><div class="av"><svg width="20" height="20" viewBox="0 0 20 20"><use href="#a3"/></svg></div><div class="pn" style="letter-spacing:0.033px">Abigail Anne Baltazar</div><svg class="pi" style="left:192px" width="12" height="12" viewBox="0 0 12 12"><use href="#pmute"/></svg><svg class="pi" style="left:210px" width="12" height="12" viewBox="0 0 12 12"><use href="#pvidoff"/></svg></div>
<div class="prow" style="top:189.1px"><div class="av" style="background:#c8322b">AD</div><div class="pn" style="letter-spacing:0.133px">Addam Diaz</div><svg class="pi" style="left:209px" width="12" height="12" viewBox="0 0 12 12"><use href="#pmute"/></svg></div>
<div class="prow" style="top:219.8px"><div class="av" style="background:#c63a1c">A</div><div class="pn" style="letter-spacing:-0.062px">Ana Chelsea Prudencio</div><svg class="pi" style="left:192px" width="12" height="12" viewBox="0 0 12 12"><use href="#pmute"/></svg><svg class="pi" style="left:210px" width="12" height="12" viewBox="0 0 12 12"><use href="#pvidoff"/></svg></div>
<div class="prow" style="top:250.5px"><div class="av" style="background:#dc6512">AF</div><div class="pn" style="letter-spacing:-0.011px">Armi Fernandez</div><svg class="pi" style="left:192px" width="12" height="12" viewBox="0 0 12 12"><use href="#pmute"/></svg><svg class="pi" style="left:210px" width="12" height="12" viewBox="0 0 12 12"><use href="#pvidoff"/></svg></div>
<div class="prow" style="top:281.2px"><div class="av"><svg width="20" height="20" viewBox="0 0 20 20"><use href="#a4"/></svg></div><div class="pn" style="letter-spacing:0.006px">Dan Zeus Almarinez</div><svg class="pi" style="left:192px" width="12" height="12" viewBox="0 0 12 12"><use href="#pmute"/></svg><svg class="pi" style="left:210px" width="12" height="12" viewBox="0 0 12 12"><use href="#pvidoff"/></svg></div>
<div class="prow" style="top:311.9px"><div class="av" style="background:#2a8bd0">DG</div><div class="pn" style="letter-spacing:-0.034px">Dana Genota</div><svg class="pi" style="left:192px" width="12" height="12" viewBox="0 0 12 12"><use href="#pmute"/></svg><svg class="pi" style="left:210px" width="12" height="12" viewBox="0 0 12 12"><use href="#pvidoff"/></svg></div>
<div class="prow" style="top:342.6px"><div class="av" style="background:#2a82c6">DK</div><div class="pn" style="letter-spacing:-0.363px">DAREN KATE OLIVA</div><svg class="pi" style="left:192px" width="12" height="12" viewBox="0 0 12 12"><use href="#pmute"/></svg><svg class="pi" style="left:210px" width="12" height="12" viewBox="0 0 12 12"><use href="#pvidoff"/></svg></div>
<div class="prow" style="top:373.3px"><div class="av"><svg width="20" height="20" viewBox="0 0 20 20"><use href="#a5"/></svg></div><div class="pn" style="letter-spacing:-0.337px">DR HLA MYAT SWAN YEE KYI</div><svg class="pi" style="left:192px" width="12" height="12" viewBox="0 0 12 12"><use href="#pmute"/></svg><svg class="pi" style="left:210px" width="12" height="12" viewBox="0 0 12 12"><use href="#pvidoff"/></svg></div>
<div class="prow" style="top:404.0px"><div class="av"><svg width="20" height="20" viewBox="0 0 20 20"><use href="#a6"/></svg></div><div class="pn" style="letter-spacing:-0.082px">DTI Laguna | Rica Mae Garcia</div><svg class="pi" style="left:192px" width="12" height="12" viewBox="0 0 12 12"><use href="#pmute"/></svg><svg class="pi" style="left:210px" width="12" height="12" viewBox="0 0 12 12"><use href="#pvidoff"/></svg></div>
<div class="prow" style="top:434.7px"><div class="av" style="background:#1f9a7c">DL</div><div class="pn" style="letter-spacing:-0.047px">DTI Laguna | Shairra Surigao</div><svg class="pi" style="left:192px" width="12" height="12" viewBox="0 0 12 12"><use href="#pmute"/></svg><svg class="pi" style="left:210px" width="12" height="12" viewBox="0 0 12 12"><use href="#pvidoff"/></svg></div>
<div class="prow" style="top:465.4px"><div class="av" style="background:#1f9a7c">DM</div><div class="pn" style="letter-spacing:-0.458px">DTI_Laguna_CRIS MARK BERM...</div><svg class="pi" style="left:192px" width="12" height="12" viewBox="0 0 12 12"><use href="#pmute"/></svg><svg class="pi" style="left:210px" width="12" height="12" viewBox="0 0 12 12"><use href="#pvidoff"/></svg></div>
  <div class="abs" style="left:0;top:495px;width:240px;height:40px;background:#fff"></div>
  <div class="abs" style="left:33.3px;top:508px;width:39.4px;height:17px;border:1px solid #95959c;border-radius:5px;font-size:9.6px;color:#232333;text-align:center;line-height:15px">Invite</div>
  <div class="abs" style="left:105px;top:508px;width:53.2px;height:17.2px;border-radius:5px;background:#0e72ed;font-size:9.6px;color:#fff;text-align:center;line-height:17px">Mute All</div>
  <div class="abs" style="left:190.3px;top:508px;width:17.3px;height:17px;border:1px solid #95959c;border-radius:5px"></div>
  <svg class="abs" style="left:194.4px;top:515.2px" width="9" height="3" viewBox="0 0 9 3"><circle cx="1.4" cy="1.5" r="0.8" fill="#33333f"/><circle cx="4.5" cy="1.5" r="0.8" fill="#33333f"/><circle cx="7.6" cy="1.5" r="0.8" fill="#33333f"/></svg>
  <!-- scrollbar -->
  <div class="abs" style="left:232.5px;top:64px;width:8px;height:431px;background:#f4f4f8"></div>
  <div class="abs" style="left:233.4px;top:66.3px;width:4.4px;height:141.5px;border-radius:2.2px;background:#9a9a9a"></div>
  <div class="abs" style="left:0;top:0;width:1px;height:535px;background:#e6e6ea"></div>
</div>

<div id="taskbar">
  <!-- active zoom bg -->
  <div class="abs" style="left:360px;top:0;width:27px;height:23px;background:#7c3f8e"></div>
  <!-- underlines -->
  <div class="abs" style="left:168.6px;top:21.4px;width:21px;height:2px;background:#dca6ea"></div>
  <div class="abs" style="left:251.8px;top:21.4px;width:21px;height:2px;background:#dca6ea"></div>
  <div class="abs" style="left:307px;top:21.4px;width:21px;height:2px;background:#dca6ea"></div>
  <div class="abs" style="left:360px;top:21.4px;width:27px;height:2px;background:#e2aef0"></div>
  <div class="abs" style="left:390.6px;top:21.4px;width:21px;height:2px;background:#dca6ea"></div>
  <!-- windows -->
  <svg class="abs" style="left:7px;top:5.4px" width="13" height="12.4" viewBox="0 0 13 12.4"><path d="M0 1.8 L5.4 1 V5.9 H0 Z M6.1 0.9 L13 0 V5.9 H6.1 Z M0 6.6 H5.4 V11.4 L0 10.6 Z M6.1 6.6 H13 V12.4 L6.1 11.5 Z" fill="#fff"/></svg>
  <!-- search -->
  <svg class="abs" style="left:33.5px;top:4.6px" width="14" height="14" viewBox="0 0 14 14"><circle cx="8.6" cy="5.2" r="4.1" fill="none" stroke="#fff" stroke-width="1.2"/><path d="M5.7 8.2 L0.8 13.2" stroke="#fff" stroke-width="1.3"/></svg>
  <!-- cortana -->
  <svg class="abs" style="left:61px;top:5.2px" width="13" height="13" viewBox="0 0 13 13"><circle cx="6.5" cy="6.5" r="5.2" fill="none" stroke="#fff" stroke-width="1.5"/></svg>
  <!-- task view -->
  <svg class="abs" style="left:87.5px;top:5px" width="14" height="13" viewBox="0 0 14 13"><path d="M0.6 1 H9.4 M0.6 12 H9.4 M11.8 1 V4 M11.8 8.8 V12" stroke="#fff" stroke-width="1.1" fill="none"/><rect x="1.2" y="3.4" width="7.8" height="6.2" fill="none" stroke="#fff" stroke-width="1.1"/><rect x="11.1" y="5.2" width="1.6" height="2.4" fill="#fff"/></svg>
  <!-- printer -->
  <svg class="abs" style="left:117px;top:5px" width="13" height="13" viewBox="0 0 13 13"><rect x="3" y="0.4" width="7" height="4" fill="#f4f4f4"/><rect x="0.4" y="3.6" width="12.2" height="6" rx="1" fill="#b9bcc0"/><rect x="2.8" y="5" width="7.4" height="2.6" fill="#6c8aa8"/><rect x="2.8" y="8.2" width="7.4" height="4.4" fill="#fafafa"/><rect x="0.4" y="8.6" width="2" height="1" fill="#8c8f94"/></svg>
  <!-- edge -->
  <svg class="abs" style="left:145px;top:4.8px" width="13.4" height="13.4" viewBox="0 0 14 14"><circle cx="7" cy="7" r="6.6" fill="#1b74c9"/><path d="M0.6 6 C1.2 2.6 4 0.4 7.2 0.4 C10.8 0.4 13.6 3 13.6 6.2 C13.6 8 12.2 9.2 10.4 9.2 C9 9.2 8.4 8.6 8.6 7.8 C9 6.4 7.8 5 6 5 C3.8 5 2.4 6.4 0.6 6 Z" fill="#43c9a0"/><path d="M0.6 6 C1 3.4 3.2 2.6 5.4 3.2 C7.6 3.8 9 5.6 8.6 7.8 C7.6 6 4.4 5.6 3.6 8.4 C3 10.6 4.6 13 7.4 13.5 C3.4 13.8 0 10.4 0.6 6 Z" fill="#0d4f9e"/><path d="M4 9 C4 11.4 6 13 8.6 12.6 C10.6 12.2 12.2 11 13 9.4 C11.4 10.6 8.4 10.8 7 9.4 C6.2 8.6 6.2 7.4 6.8 6.8 C5.2 6.6 4 7.6 4 9 Z" fill="#2ea2e6"/></svg>
  <!-- folder -->
  <svg class="abs" style="left:172.6px;top:5.2px" width="13.4" height="12.4" viewBox="0 0 14 13"><path d="M0.4 1.6 Q0.4 0.8 1.2 0.8 H5 L6.2 2.2 H12.8 Q13.6 2.2 13.6 3 V11 H0.4 Z" fill="#e9a520"/><rect x="0.4" y="3.6" width="13.2" height="8.6" rx="0.6" fill="#ffd35a"/><rect x="3.6" y="7.6" width="6.8" height="4.6" fill="#2f8fe0"/><rect x="5.4" y="9.8" width="3.2" height="2.4" fill="#ffd35a"/></svg>
  <!-- calculator -->
  <svg class="abs" style="left:202px;top:5.4px" width="10" height="12.4" viewBox="0 0 10 12.4"><rect x="0.3" y="0.3" width="9.4" height="11.8" rx="0.8" fill="#6b7a8a"/><rect x="1.4" y="1.4" width="7.2" height="2.6" fill="#aee4f2"/><g fill="#dfe6ec"><rect x="1.4" y="5" width="1.8" height="1.6"/><rect x="4.1" y="5" width="1.8" height="1.6"/><rect x="6.8" y="5" width="1.8" height="1.6"/><rect x="1.4" y="7.4" width="1.8" height="1.6"/><rect x="4.1" y="7.4" width="1.8" height="1.6"/><rect x="6.8" y="7.4" width="1.8" height="1.6"/><rect x="1.4" y="9.8" width="1.8" height="1.6"/><rect x="4.1" y="9.8" width="1.8" height="1.6"/><rect x="6.8" y="9.8" width="1.8" height="1.6"/></g></svg>
  <!-- snipping -->
  <svg class="abs" style="left:228px;top:5px" width="13.4" height="13" viewBox="0 0 14 13"><ellipse cx="6.6" cy="5" rx="5.8" ry="3.6" fill="#f1f1f1" stroke="#d9482e" stroke-width="1.2"/><path d="M3 3.4 L10.6 9.6 M4 8.6 L11 4" stroke="#b9342a" stroke-width="1"/><circle cx="9.6" cy="10.6" r="1.5" fill="none" stroke="#2f7fd6" stroke-width="1.1"/><circle cx="12" cy="8" r="1.4" fill="none" stroke="#2f7fd6" stroke-width="1.1"/></svg>
  <!-- excel -->
  <svg class="abs" style="left:256px;top:5.2px" width="13" height="12.6" viewBox="0 0 13 12.6"><rect x="5" y="0.8" width="7.6" height="11" rx="0.6" fill="#e9f5ee" stroke="#1f7a45" stroke-width="0.8"/><path d="M8.4 3 H11.4 M8.4 5.2 H11.4 M8.4 7.4 H11.4 M8.4 9.6 H11.4" stroke="#1f7a45" stroke-width="1.1"/><path d="M0.2 1.2 L7.6 0 V12.6 L0.2 11.4 Z" fill="#1d6f3f"/><path d="M2.2 3.8 L5.6 8.8 M5.6 3.8 L2.2 8.8" stroke="#fff" stroke-width="1.2"/></svg>
  <!-- chrome -->
  <svg class="abs" style="left:283.6px;top:4.8px" width="13.4" height="13.4" viewBox="0 0 14 14"><circle cx="7" cy="7" r="6.7" fill="#e53e30"/><path d="M7 7 L1.2 3.6 A6.7 6.7 0 0 0 6.2 13.65 L9.4 8.2 Z" fill="#2ba24c"/><path d="M7 7 L6.2 13.65 A6.7 6.7 0 0 0 13.35 4.8 L7 4.8 Z" fill="#fbc116"/><path d="M1.2 3.6 A6.7 6.7 0 0 1 13.35 4.8 L7 4.8 Z" fill="#e53e30"/><circle cx="7" cy="7" r="3.1" fill="#fff"/><circle cx="7" cy="7" r="2.4" fill="#3a7df0"/></svg>
  <!-- word -->
  <svg class="abs" style="left:311.4px;top:5.2px" width="13" height="12.6" viewBox="0 0 13 12.6"><rect x="5" y="0.8" width="7.6" height="11" rx="0.6" fill="#eef2fa" stroke="#2a569a" stroke-width="0.8"/><path d="M8.4 3 H11.4 M8.4 5.2 H11.4 M8.4 7.4 H11.4 M8.4 9.6 H11.4" stroke="#2a569a" stroke-width="1.1"/><path d="M0.2 1.2 L7.6 0 V12.6 L0.2 11.4 Z" fill="#2a569a"/><path d="M1.6 4 L2.6 8.8 L3.9 5 L5.2 8.8 L6.2 4" stroke="#fff" stroke-width="1" fill="none"/></svg>
  <!-- notepad -->
  <svg class="abs" style="left:340px;top:5px" width="12.4" height="13" viewBox="0 0 12.4 13"><path d="M2.6 1.2 L11.8 0.4 L10.6 11.4 L0.6 12.4 Z" fill="#bfe3ea"/><path d="M3.6 2.6 L10.6 2 L9.8 10 L2.2 10.8 Z" fill="#8ecbdc"/><path d="M4.4 4 L9.6 3.6 M4.2 6 L9.4 5.6 M4 8 L9.2 7.6" stroke="#e9f7fa" stroke-width="0.9"/><path d="M0.6 12.4 L10.6 11.4 L10.8 12.4 L1 13 Z" fill="#f3f0e2"/></svg>
  <!-- zoom -->
  <svg class="abs" style="left:367.2px;top:5.2px" width="12" height="12" viewBox="0 0 12 12"><rect width="12" height="12" rx="3.4" fill="#4a8cff"/><rect x="2.2" y="4" width="5" height="4" rx="0.8" fill="#fff"/><path d="M7.6 5.4 L9.8 4.2 V7.8 L7.6 6.6 Z" fill="#fff"/></svg>
  <!-- chrome 2 -->
  <svg class="abs" style="left:395.2px;top:4.8px" width="13.4" height="13.4" viewBox="0 0 14 14"><circle cx="7" cy="7" r="6.7" fill="#e53e30"/><path d="M7 7 L1.2 3.6 A6.7 6.7 0 0 0 6.2 13.65 L9.4 8.2 Z" fill="#2ba24c"/><path d="M7 7 L6.2 13.65 A6.7 6.7 0 0 0 13.35 4.8 L7 4.8 Z" fill="#fbc116"/><path d="M1.2 3.6 A6.7 6.7 0 0 1 13.35 4.8 L7 4.8 Z" fill="#e53e30"/><circle cx="7" cy="7" r="3.1" fill="#fff"/><circle cx="7" cy="7" r="2.4" fill="#3a7df0"/><circle cx="10.4" cy="10.6" r="3" fill="#6a3fb0"/><circle cx="10.4" cy="10.6" r="1" fill="#b79ce6"/></svg>

  <!-- right tray -->
  <svg class="abs" style="left:769px;top:6px" width="18" height="12.6" viewBox="0 0 18 12.6"><path d="M4.4 12.2 C1.8 12.2 0.4 10.6 0.4 8.8 C0.4 7 1.8 5.6 3.6 5.6 C4 2.6 6.2 0.6 9 0.6 C11.6 0.6 13.6 2.2 14.2 4.6 C16.2 4.8 17.6 6.4 17.6 8.4 C17.6 10.6 16 12.2 13.8 12.2 Z" fill="#bcd8f4"/><path d="M4.4 12.2 C1.8 12.2 0.4 10.6 0.4 8.8 C0.4 7.6 1 6.6 2 6 C3.6 7.6 6 8.4 9 8.4 C12.6 8.4 15.4 7.2 17 5.6 C17.4 6.4 17.6 7.4 17.6 8.4 C17.6 10.6 16 12.2 13.8 12.2 Z" fill="#8db9e8"/></svg>
  <div class="abs" style="left:793px;top:5.2px;font-size:10.6px;line-height:15px;color:#fff;white-space:nowrap;letter-spacing:-0.2px">29°C</div>
  <div class="abs" style="left:821.5px;top:5.2px;font-size:10.6px;line-height:15px;color:#fff;white-space:nowrap;letter-spacing:-0.2px">Cloudy</div>
  <svg class="abs" style="left:861.5px;top:8.8px" width="10" height="6" viewBox="0 0 10 6"><path d="M0.6 5.2 L5 0.9 L9.4 5.2" fill="none" stroke="#fff" stroke-width="1"/></svg>
  <svg class="abs" style="left:878px;top:6.2px" width="13" height="12" viewBox="0 0 13 12"><path d="M0.6 4.2 H2.6 L5.4 1.4 V10.6 L2.6 7.8 H0.6 Z" fill="none" stroke="#fff" stroke-width="0.9"/><path d="M7 4.2 Q8.2 6 7 7.8 M8.8 2.8 Q10.8 6 8.8 9.2 M10.6 1.4 Q13.4 6 10.6 10.6" fill="none" stroke="#fff" stroke-width="0.9"/></svg>
  <svg class="abs" style="left:896.4px;top:5.6px" width="14" height="13.4" viewBox="0 0 14 13.4"><rect x="0.6" y="1" width="11.4" height="8.6" fill="none" stroke="#fff" stroke-width="0.9"/><path d="M3 11.6 H9.6 M6.3 9.6 V11.6" stroke="#fff" stroke-width="0.9"/><path d="M3.4 5.2 L5.6 3.4 V7 Z M5.6 5.2 H8.8" fill="#fff" stroke="#fff" stroke-width="0.8"/><circle cx="10.6" cy="10" r="2.7" fill="#f5a623"/></svg>
  <div class="abs" style="left:916.4px;top:4.9px;font-size:8.4px;line-height:14px;color:#fff;white-space:nowrap">ENG</div>
  <div class="abs" style="left:943px;top:4.9px;font-size:8.6px;line-height:14px;color:#fff;white-space:nowrap;letter-spacing:-0.05px">10:37 AM</div>
  <svg class="abs" style="left:992.6px;top:6px" width="13.4" height="12.8" viewBox="0 0 14 13.4"><path d="M0.8 0.8 H13 V9.4 H8.6 L6.6 11.8 V9.4 H0.8 Z" fill="none" stroke="#fff" stroke-width="1"/></svg>
</div>
</div>
</body>
</html>
